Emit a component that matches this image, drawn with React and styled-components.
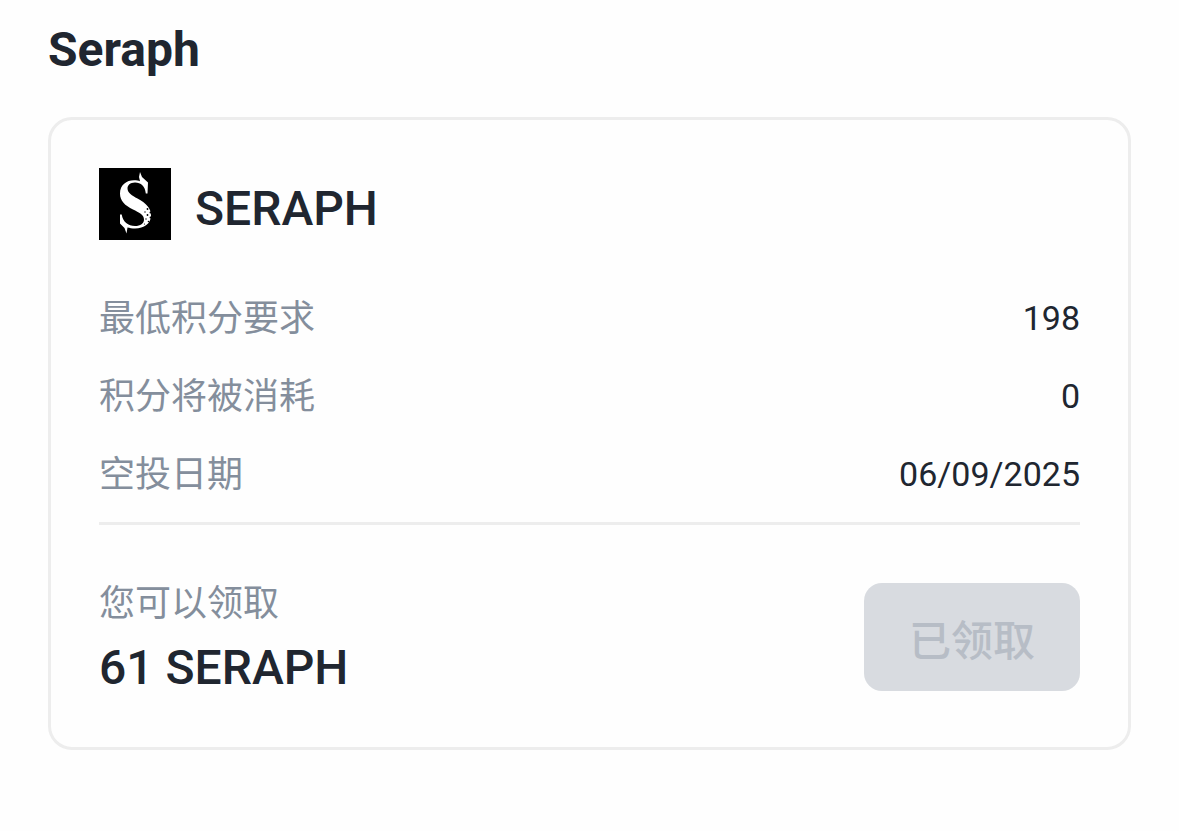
import React from 'react';
import styled, { createGlobalStyle } from 'styled-components';

const details = [
  { label: '最低积分要求', value: '198' },
  { label: '积分将被消耗', value: '0' },
  { label: '空投日期', value: '06/09/2025' },
];

const SeraphLogo = () => (
  <Logo viewBox="0 0 72 72" role="img" aria-label="Seraph">
    <rect width="72" height="72" fill="#000" />
    <path
      fill="#fff"
      d="M41 4 L43 9 L49 14.5 L48.5 25.5 L46.8 25.5 C46 18 42 14.6 36 14.6 C31 14.6 28.500 17.500 28.500 20.500 C28.500 25 33 27.500 38.500 30.500 C47 35 52 40 52 47.500 C52 55.500 45 60.500 36 60.500 C33 60.500 30.500 60 28.500 59.500 L27.500 65.500 L25.500 60 L21 55.500 L21 46.500 L22.700 46.500 C24 54 29 58 36 58 C41.500 58 45 55.500 45 51.500 C45 46.500 40 44.500 34 41.500 C26 37.500 21 33 21 25.500 C21 17 27.500 12.300 35 12.300 C37.500 12.300 39.500 12.700 41 13.200 L40 9 Z"
    />
    <g fill="#000">
      <circle cx="48.500" cy="41" r="0.900" />
      <circle cx="46" cy="44" r="0.700" />
      <circle cx="51.500" cy="44.500" r="1" />
      <circle cx="48.500" cy="47" r="0.900" />
      <circle cx="51.500" cy="49.500" r="0.900" />
      <circle cx="47" cy="51" r="0.700" />
      <circle cx="49.500" cy="53.500" r="0.800" />
      <circle cx="45.500" cy="56" r="0.600" />
    </g>
  </Logo>
);

const App = () => {
  return (
    <>
      <GlobalStyle />
      <Page>
        <Title>Seraph</Title>
        <Card>
          <Header>
            <SeraphLogo />
            <TokenName>SERAPH</TokenName>
          </Header>
          <Details>
            {details.map((item) => (
              <DetailRow key={item.label}>
                <Label>{item.label}</Label>
                <Value>{item.value}</Value>
              </DetailRow>
            ))}
          </Details>
          <Footer>
            <div>
              <ClaimLabel>您可以领取</ClaimLabel>
              <Amount>61 SERAPH</Amount>
            </div>
            <ClaimButton type="button" disabled>
              已领取
            </ClaimButton>
          </Footer>
        </Card>
      </Page>
    </>
  );
};

export default App;

const GlobalStyle = createGlobalStyle`
  * {
    box-sizing: border-box;
  }
  body {
    margin: 0;
    background-color: #fefefe;
    color: #202630;
    font-family: Roboto, 'Noto Sans CJK SC', sans-serif;
  }
`;

const Page = styled.main`
  padding: 14px 48px 48px;
`;

const Title = styled.h1`
  margin: 0 0 31px;
  font-size: 48px;
  line-height: 72px;
  font-weight: 700;
`;

const Card = styled.section`
  padding: 48px 48px 46px;
  border: 3px solid #ededed;
  border-radius: 24px;
`;

const Header = styled.header`
  display: flex;
  align-items: flex-end;
  gap: 24px;
  margin-bottom: 51px;
`;

const Logo = styled.svg`
  width: 72px;
  height: 72px;
  flex-shrink: 0;
`;

const TokenName = styled.h2`
  margin: 0;
  font-size: 48px;
  line-height: 62px;
  font-weight: 500;
`;

const Details = styled.dl`
  display: flex;
  flex-direction: column;
  gap: 22px;
  margin: 0;
  padding-bottom: 19px;
  border-bottom: 3px solid #ededed;
`;

const DetailRow = styled.div`
  display: flex;
  align-items: flex-start;
  justify-content: space-between;
`;

const Label = styled.dt`
  color: #848e9c;
  font-size: 36px;
  line-height: 56px;
`;

const Value = styled.dd`
  margin: 0;
  font-size: 34px;
  line-height: 54px;
`;

const Footer = styled.footer`
  display: flex;
  align-items: center;
  justify-content: space-between;
  padding-top: 48px;
`;

const ClaimLabel = styled.p`
  margin: 0;
  color: #848e9c;
  font-size: 36px;
  line-height: 62px;
`;

const Amount = styled.p`
  margin: 0;
  font-size: 48px;
  line-height: 66px;
  font-weight: 500;
`;

const ClaimButton = styled.button`
  min-width: 216px;
  height: 108px;
  padding: 0 42px;
  border: none;
  border-radius: 18px;
  background-color: #d8dbe0;
  color: #b7bdc6;
  font-family: inherit;
  font-size: 42px;
  font-weight: 500;
`;
